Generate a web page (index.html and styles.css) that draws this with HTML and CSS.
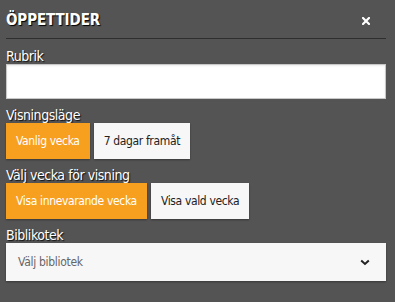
FILE: index.html
```html
<!DOCTYPE html>
<html lang="sv">
<head>
<meta charset="utf-8">
<link rel="stylesheet" href="styles.css">
</head>
<body>
<div class="panel">
  <div class="header">
    <h1 class="title">ÖPPETTIDER</h1>
    <svg class="close" width="8" height="8" viewBox="0 0 8 8"><path d="M1,1 L7,7 M7,1 L1,7" stroke="#fff" stroke-width="2.2" stroke-linecap="square"/></svg>
  </div>
  <div class="field first">
    <label class="label">Rubrik</label>
    <input class="input" type="text">
  </div>
  <div class="field">
    <div class="label">Visningsläge</div>
    <div class="btns">
      <button class="btn active">Vanlig vecka</button>
      <button class="btn">7 dagar framåt</button>
    </div>
  </div>
  <div class="field">
    <div class="label">Välj vecka för visning</div>
    <div class="btns">
      <button class="btn active">Visa innevarande vecka</button>
      <button class="btn">Visa vald vecka</button>
    </div>
  </div>
  <div class="field">
    <div class="label">Biblikotek</div>
    <div class="select">
      <span class="placeholder">Välj bibliotek</span>
      <svg class="chev" width="10" height="7" viewBox="0 0 10 7"><polyline points="1.2,1.5 5,5 8.8,1.5" fill="none" stroke="#222" stroke-width="2"/></svg>
    </div>
  </div>
</div>
</body>
</html>
```
FILE: styles.css
```css
html, body {
  margin: 0;
  padding: 0;
  background: #545454;
}
body {
  font-family: "DejaVu Sans", "Liberation Sans", sans-serif;
  font-stretch: condensed;
  width: 395px;
  height: 302px;
  overflow: hidden;
}
.panel {
  padding: 0 9px 0 6px;
}
.header {
  height: 38px;
  border-bottom: 1px solid #2e2e2e;
  display: flex;
  align-items: center;
  justify-content: space-between;
}
.title {
  margin: 0;
  font-size: 15px;
  font-weight: bold;
  color: #fff;
  letter-spacing: -0.1px;
  text-shadow: 1px 1px 1px #000;
  padding-top: 2px;
}
.close {
  display: block;
  margin-right: 16px;
  margin-top: 3px;
}
.field {
  margin-top: 8px;
}
.field.first {
  margin-top: 9px;
}
.label {
  display: block;
  font-size: 14px;
  line-height: 16px;
  letter-spacing: -0.45px;
  color: #fff;
  text-shadow: 1px 1px 1px #111;
}
.input {
  display: block;
  box-sizing: border-box;
  width: 100%;
  height: 35px;
  margin: 0;
  border: 1px solid #c8c8c8;
  background: #fff;
  box-shadow: inset 0 1px 2px rgba(0,0,0,0.08);
}
.btns {
  display: flex;
  gap: 4px;
}
.btn {
  height: 36px;
  padding: 0 10px;
  border: 0;
  margin: 0;
  background: #f7f7f7;
  color: #222;
  font-family: inherit;
  font-stretch: condensed;
  font-size: 12px;
  letter-spacing: -0.35px;
  box-shadow: 0 1px 2px rgba(0,0,0,0.35);
}
.btn.active {
  background: #f7a01f;
  color: #fff;
}
.select {
  height: 38px;
  background: #f7f7f7;
  display: flex;
  align-items: center;
  justify-content: space-between;
  padding: 0 16px 0 12px;
  box-shadow: 0 1px 2px rgba(0,0,0,0.35);
}
.placeholder {
  font-size: 12px;
  letter-spacing: -0.3px;
  color: #666;
}
.chev {
  display: block;
  margin-top: 1px;
}
```
